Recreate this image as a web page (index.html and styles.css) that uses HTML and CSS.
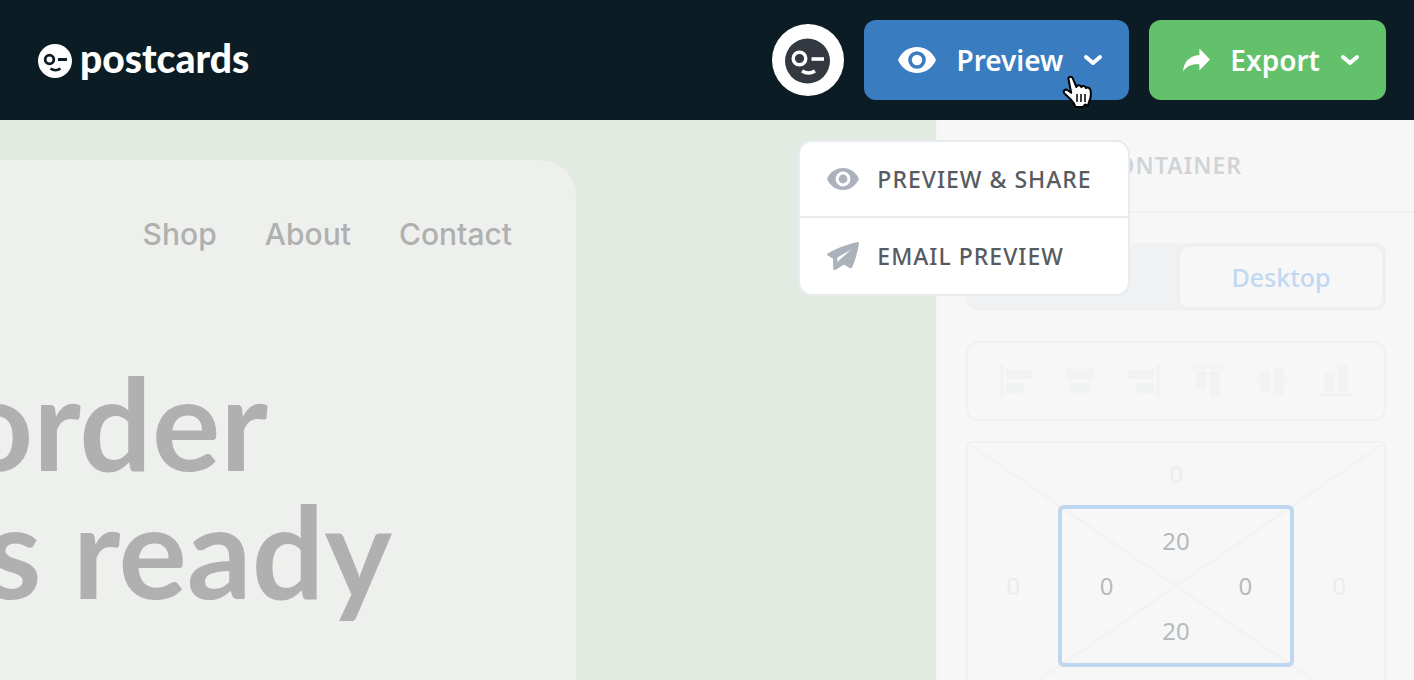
FILE: index.html
```
<!DOCTYPE html>
<html lang="en">
<head>
    <meta charset="UTF-8">
    <title>Postcards</title>
    <link rel="stylesheet" href="styles.css">
</head>
<body>
<!-- Top bar -->
<header class="topbar">
    <a class="logo" href="#">
        <svg width="34" height="36" viewBox="0 -2 34 36" aria-hidden="true">
            <circle cx="17" cy="17" r="17" fill="#fff"/>
            <circle cx="11.500" cy="15.500" r="4.300" fill="none" stroke="#0c1c24" stroke-width="2.800"/>
            <path d="M20 15.500h9" stroke="#0c1c24" stroke-width="3"/>
            <path d="M12.500 24.500q5 3.500 10 0" fill="none" stroke="#0c1c24" stroke-width="2.600"/>
        </svg>
        <span>postcards</span>
    </a>

    <div class="actions">
        <button class="avatar" type="button" aria-label="Account">
            <svg width="46" height="48" viewBox="0 -2 46 48">
                <circle cx="22.500" cy="23" r="22.500" fill="#343840"/>
                <circle cx="14.500" cy="20.500" r="6.300" fill="none" stroke="#fff" stroke-width="3.400"/>
                <path d="M26.500 21H39" stroke="#fff" stroke-width="3.600"/>
                <path d="M17 33q6.500 4 13 0" fill="none" stroke="#fff" stroke-width="3.600"/>
            </svg>
        </button>

        <div class="dropdown">
            <button class="btn btn-preview" type="button" aria-expanded="true">
                <svg width="38" height="26" viewBox="0 0 38 26">
                    <path fill="#fff" fill-rule="evenodd" d="M19 0C10.500 0 3.300 5.200 0 13c3.300 7.800 10.500 13 19 13s15.700-5.200 19-13C34.700 5.200 27.500 0 19 0zm0 21.800a8.800 8.800 0 1 1 0-17.600 8.800 8.800 0 0 1 0 17.600zM19 7.800a5.200 5.200 0 1 0 0 10.400 5.200 5.200 0 0 0 0-10.400z"/>
                </svg>
                <span>Preview</span>
                <svg width="20" height="12" viewBox="0 0 20 12">
                    <path d="M3 3l7 6 7-6" fill="none" stroke="#fff" stroke-width="4" stroke-linecap="round" stroke-linejoin="round"/>
                </svg>
            </button>

            <div class="menu">
                <a href="#">
                    <svg width="32" height="22" viewBox="0 0 38 26">
                        <path fill="#abb2bb" fill-rule="evenodd" d="M19 0C10.500 0 3.300 5.200 0 13c3.300 7.800 10.500 13 19 13s15.700-5.200 19-13C34.700 5.200 27.500 0 19 0zm0 21.800a8.800 8.800 0 1 1 0-17.600 8.800 8.800 0 0 1 0 17.600zM19 7.800a5.200 5.200 0 1 0 0 10.400 5.200 5.200 0 0 0 0-10.400z"/>
                    </svg>
                    <span>PREVIEW &amp; SHARE</span>
                </a>
                <a href="#">
                    <svg width="32" height="28" viewBox="0 0 32 28">
                        <path fill="#abb2bb" fill-rule="evenodd" d="M30.500.1Q32.200 0 31.900 1.800C30.500 10 28.500 18 25.200 25.200Q24.300 26.800 22.700 26l-6-3.500-7.300 5.100Q6.400 29 6.200 26.300L6 16.800.8 13.600Q-.800 12.300 1 11.300 15 3.500 30.500.1zM24.300 7.400L10.400 15.500l-.1 4.500z"/>
                    </svg>
                    <span>EMAIL PREVIEW</span>
                </a>
            </div>

            <!-- Hand pointer -->
            <svg class="pointer" width="32" height="34" viewBox="0 0 32 34">
                <path fill="#fff" stroke="#000" stroke-width="2" stroke-linejoin="round" d="M6.300 3.300C7.300 1.200 10 1.200 10.800 3.400L14.400 12c.9-2.500 4.200-2.300 5 .1.900-1.700 3.900-1.300 4.600 1 1.300-1.300 4-.4 4.500 2 .9 5.300.2 9-1.700 12.500L26 31l-3-1.500-2 2.500H13.500c-.7-3-2.300-5-4.500-7.300l-6.500-6.200c-2-2.500.8-5 3.200-3.200l3.500 2.500z"/>
                <path d="M15 19v8M19 19v8M23 19v8" stroke="#000" stroke-width="1.500"/>
            </svg>
        </div>

        <button class="btn btn-export" type="button">
            <svg width="27" height="24" viewBox="0 0 28 24">
                <path fill="#fff" d="M17 0l11 11.500L17 23v-6.500C9.500 15.800 4 18 0 24 1 13.500 7 7.500 17 6.800z"/>
            </svg>
            <span>Export</span>
            <svg width="20" height="12" viewBox="0 0 20 12">
                <path d="M3 3l7 6 7-6" fill="none" stroke="#fff" stroke-width="4" stroke-linecap="round" stroke-linejoin="round"/>
            </svg>
        </button>
    </div>
</header>

<div class="workspace">
    <!-- Email on the canvas -->
    <main class="canvas">
        <div class="email">
            <nav class="email-nav">
                <a href="#">Shop</a>
                <a href="#">About</a>
                <a href="#">Contact</a>
            </nav>
            <h1 class="email-title">
                <span class="line-one">order</span>
                <span class="line-two">s ready</span>
            </h1>
        </div>
    </main>

    <!-- Container settings -->
    <aside class="panel">
        <h2 class="panel-title">CONTAINER</h2>
        <div class="panel-body">
            <div class="switch">
                <button type="button" aria-label="Mobile"></button>
                <button class="active" type="button">Desktop</button>
            </div>

            <div class="align">
                <button type="button" aria-label="Align left">
                    <svg width="32" height="32" viewBox="0 0 32 32"><path class="rail" d="M0 0h4v32H0z"/><rect x="6" y="4" width="26" height="10" rx="1"/><rect x="6" y="18" width="18" height="10" rx="1"/></svg>
                </button>
                <button type="button" aria-label="Align center">
                    <svg width="32" height="32" viewBox="0 0 32 32"><path class="rail-center" d="M14 0h4v32h-4z"/><rect x="2" y="4" width="28" height="10" rx="1"/><rect x="6" y="18" width="20" height="10" rx="1"/></svg>
                </button>
                <button type="button" aria-label="Align right">
                    <svg width="32" height="32" viewBox="0 0 32 32"><path class="rail" d="M28 0h4v32h-4z"/><rect x="0" y="4" width="26" height="10" rx="1"/><rect x="8" y="18" width="18" height="10" rx="1"/></svg>
                </button>
                <button type="button" aria-label="Align top">
                    <svg width="32" height="32" viewBox="0 0 32 32"><path class="rail" d="M0 0h32v4H0z"/><rect x="4" y="6" width="10" height="18" rx="1"/><rect x="18" y="6" width="10" height="26" rx="1"/></svg>
                </button>
                <button type="button" aria-label="Align middle">
                    <svg width="32" height="32" viewBox="0 0 32 32"><path class="rail-center" d="M0 14h32v4H0z"/><rect x="4" y="6" width="10" height="20" rx="1"/><rect x="18" y="2" width="10" height="28" rx="1"/></svg>
                </button>
                <button type="button" aria-label="Align bottom">
                    <svg width="32" height="32" viewBox="0 0 32 32"><path class="rail" d="M0 28h32v4H0z"/><rect x="4" y="8" width="10" height="18" rx="1"/><rect x="18" y="0" width="10" height="26" rx="1"/></svg>
                </button>
            </div>

            <div class="spacing">
                <svg class="diagonals" viewBox="0 0 416 284" preserveAspectRatio="none" aria-hidden="true">
                    <path d="M0 0l416 284M416 0L0 284" fill="none" stroke="#f3f3f3" stroke-width="3"/>
                </svg>
                <input class="top" type="text" value="0" aria-label="Margin top">
                <input class="left" type="text" value="0" aria-label="Margin left">
                <div class="padding-box">
                    <input class="top" type="text" value="20" aria-label="Padding top">
                    <input class="left" type="text" value="0" aria-label="Padding left">
                    <input class="right" type="text" value="0" aria-label="Padding right">
                    <input class="bottom" type="text" value="20" aria-label="Padding bottom">
                </div>
                <input class="right" type="text" value="0" aria-label="Margin right">
            </div>
        </div>
    </aside>
</div>
</body>
</html>
```
FILE: styles.css
```
* {
    box-sizing: border-box;
}
body {
    margin: 0;
    height: 100vh;
    display: flex;
    flex-direction: column;
    overflow: hidden;
    font-family: "Noto Sans", sans-serif;
    background-color: #f7f7f7;
}
a {
    color: inherit;
    text-decoration: none;
}
button {
    padding: 0;
    border: none;
    background: none;
    font-family: inherit;
    cursor: pointer;
}
svg {
    display: block;
    flex-shrink: 0;
}

/* Top bar */
.topbar {
    flex-shrink: 0;
    display: flex;
    justify-content: space-between;
    align-items: center;
    padding: 20px 28px 20px 38px;
    background-color: #0c1c24;
    color: white;
}
.logo {
    display: flex;
    align-items: center;
    gap: 8px;
    font-family: Lato, sans-serif;
    font-size: 39px;
    font-weight: 900;
    line-height: 36px;
}
.logo span {
    padding-bottom: 4px;
}
.actions {
    display: flex;
    align-items: center;
    gap: 20px;
}
.avatar {
    width: 72px;
    height: 72px;
    display: flex;
    align-items: center;
    justify-content: center;
    border-radius: 50%;
    background-color: white;
}
.dropdown {
    position: relative;
}
.btn {
    display: flex;
    align-items: center;
    gap: 20px;
    height: 80px;
    padding: 0 26px 0 34px;
    border-radius: 12px;
    color: white;
    font-size: 28px;
    font-weight: 600;
}
.btn-preview {
    background-color: #3a7cc0;
}
.btn-export {
    background-color: #62c16a;
}

/* Preview menu */
.menu {
    position: absolute;
    top: 120px;
    right: -1px;
    z-index: 10;
    width: 332px;
    border: 2px solid #e8ecf1;
    border-radius: 14px;
    background-color: white;
    color: #575b61;
    font-size: 23px;
    font-weight: 500;
    letter-spacing: 1px;
}
.menu a {
    display: flex;
    align-items: center;
    gap: 18px;
    height: 76px;
    padding: 0 27px;
    white-space: nowrap;
}
.menu a:first-child {
    border-bottom: 2px solid #e8ecf1;
}
.pointer {
    position: absolute;
    right: 35px;
    bottom: -9px;
    z-index: 11;
}

/* Canvas */
.workspace {
    flex: 1;
    min-height: 0;
    display: flex;
}
.canvas {
    flex: 1;
    min-width: 0;
    padding: 40px 360px 0 0;
    overflow: hidden;
    background-color: #e2ebe2;
}
.email {
    height: 100%;
    padding: 54px 64px 0 0;
    overflow: hidden;
    border-radius: 0 36px 0 0;
    background-color: #eef0ed;
    color: #b0b0b0;
}
.email-nav {
    display: flex;
    justify-content: flex-end;
    gap: 48px;
    font-family: Inter, sans-serif;
    font-size: 30px;
    font-weight: 500;
    line-height: 40px;
}
.email-title {
    display: flex;
    flex-direction: column;
    align-items: flex-end;
    margin: 104px 0 0;
    font-family: Lato, sans-serif;
    font-size: 128px;
    font-weight: 700;
    line-height: 128px;
    white-space: nowrap;
}
.line-one {
    padding-right: 244px;
}
.line-two {
    padding-right: 120px;
}

/* Settings panel */
.panel {
    flex: 0 0 478px;
    overflow: hidden;
    border-left: 2px solid #f5f5f5;
    background-color: #f7f7f7;
}
.panel-title {
    margin: 0;
    padding: 0 172px 0 0;
    border-bottom: 2px solid #f1f1f1;
    color: #d0d4d7;
    font-size: 23px;
    font-weight: 600;
    letter-spacing: 1px;
    line-height: 91px;
    text-align: right;
}
.panel-body {
    display: flex;
    flex-direction: column;
    gap: 20px;
    padding: 30px 28px 0;
}
.switch {
    display: grid;
    grid-template-columns: 1fr 1fr;
    height: 68px;
    margin-bottom: 10px;
    border-radius: 12px;
    background-color: #f0f1f3;
}
.switch button {
    border-radius: 12px;
    font-size: 25px;
    font-weight: 500;
}
.switch .active {
    border: 4px solid #eeeff0;
    background-color: #f7f7f7;
    color: #c0d8f2;
}
.align {
    display: flex;
    justify-content: space-between;
    align-items: center;
    height: 80px;
    padding: 0 32px;
    border: 2px solid #f1f1f1;
    border-radius: 12px;
}
.align svg {
    fill: #f1f3f2;
}
.align .rail {
    fill: #f3f3f3;
}
.align .rail-center {
    fill: #f5f5f5;
}

/* Margin and padding editor */
.spacing,
.padding-box {
    display: grid;
    align-items: center;
    justify-items: center;
}
.spacing {
    position: relative;
    grid-template: 62px 162px 62px / 90px 1fr 90px;
    border: 2px solid #f1f1f1;
    border-radius: 6px;
    color: #ebecec;
}
.padding-box {
    position: relative;
    grid-area: 2 / 2;
    grid-template: 1fr 1fr 1fr / 1fr 1fr 1fr;
    width: 100%;
    height: 100%;
    padding: 10px;
    border: 4px solid #bed6ef;
    border-radius: 6px;
    color: #b6babd;
}
.diagonals {
    position: absolute;
    top: 0;
    left: 0;
    width: 100%;
    height: 100%;
}
.spacing input {
    position: relative;
    width: 48px;
    padding: 0;
    border: none;
    outline: none;
    background: none;
    color: inherit;
    font-family: inherit;
    font-size: 24px;
    line-height: 32px;
    text-align: center;
}
.top {
    grid-area: 1 / 2;
}
.left {
    grid-area: 2 / 1;
}
.right {
    grid-area: 2 / 3;
}
.bottom {
    grid-area: 3 / 2;
}
```
